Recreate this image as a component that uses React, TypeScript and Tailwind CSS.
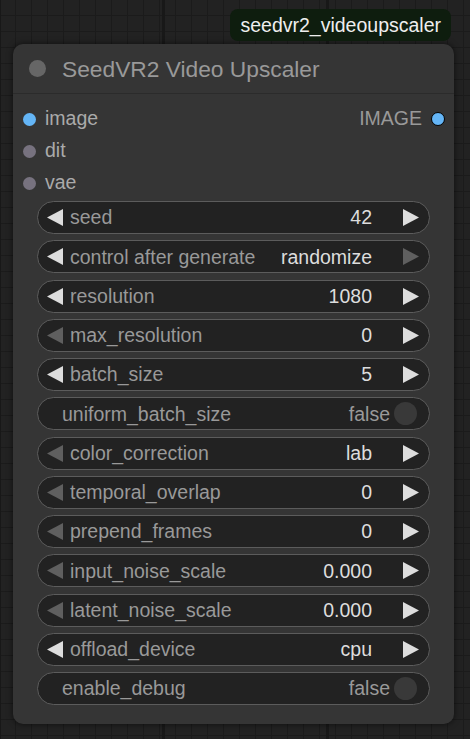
import React from "react";

type Widget =
  | { kind: "number"; label: string; value: string; left: boolean; right: boolean }
  | { kind: "toggle"; label: string; value: string };

const widgets: Widget[] = [
  { kind: "number", label: "seed", value: "42", left: true, right: true },
  { kind: "number", label: "control after generate", value: "randomize", left: true, right: false },
  { kind: "number", label: "resolution", value: "1080", left: true, right: true },
  { kind: "number", label: "max_resolution", value: "0", left: false, right: true },
  { kind: "number", label: "batch_size", value: "5", left: true, right: true },
  { kind: "toggle", label: "uniform_batch_size", value: "false" },
  { kind: "number", label: "color_correction", value: "lab", left: false, right: true },
  { kind: "number", label: "temporal_overlap", value: "0", left: false, right: true },
  { kind: "number", label: "prepend_frames", value: "0", left: false, right: true },
  { kind: "number", label: "input_noise_scale", value: "0.000", left: false, right: true },
  { kind: "number", label: "latent_noise_scale", value: "0.000", left: false, right: true },
  { kind: "number", label: "offload_device", value: "cpu", left: true, right: true },
  { kind: "toggle", label: "enable_debug", value: "false" },
];

function Arrow({ dir, on }: { dir: "left" | "right"; on: boolean }) {
  return (
    <svg width="16" height="17" viewBox="0 0 16 17" className="shrink-0">
      <polygon
        points={dir === "left" ? "16,0 16,17 0,8.5" : "0,0 0,17 16,8.5"}
        fill={on ? "#dddddd" : "#5f5f5f"}
      />
    </svg>
  );
}

function Row({ w }: { w: Widget }) {
  if (w.kind === "toggle") {
    return (
      <div className="flex h-[33px] items-center rounded-full border-[1.5px] border-[#5c5c5c] bg-[#222222] pl-[24px] pr-[12px]">
        <span className="flex-1 pt-[1px] text-[#999999]">{w.label}</span>
        <span className="pt-[1px] text-[#999999]">{w.value}</span>
        <span className="ml-[4px] h-[23px] w-[23px] rounded-full bg-[#393939]" />
      </div>
    );
  }
  return (
    <div className="flex h-[33px] items-center rounded-full border-[1.5px] border-[#5c5c5c] bg-[#222222] pl-[9px] pr-[10px]">
      <Arrow dir="left" on={w.left} />
      <span className="ml-[7px] flex-1 pt-[1px] text-[#999999]">{w.label}</span>
      <span className="mr-[31px] pt-[1px] text-[#dddddd]">{w.value}</span>
      <Arrow dir="right" on={w.right} />
    </div>
  );
}

export default function App() {
  return (
    <div
      className="h-[739px] w-[470px] overflow-hidden bg-[#222222] bg-[linear-gradient(to_right,#181818_3px,transparent_3px),linear-gradient(to_right,#1b1b1b_1px,transparent_1px),linear-gradient(to_bottom,#1b1b1b_1px,transparent_1px)] bg-[size:164px_100%,16px_16px,16px_16px] bg-[position:-2px_0,15px_15px,15px_15px] pt-[9px] font-['Liberation_Sans',Arial,sans-serif] text-[19.5px] leading-none"
    >
      <div className="flex justify-end pr-[19px]">
        <div className="flex h-[32px] items-center rounded-[8px] bg-[#0e1d0e] px-[10px] pt-[1px] text-[#eeeeee]">
          seedvr2_videoupscaler
        </div>
      </div>
      <div className="ml-[13px] mt-[3px] w-[441px] rounded-[10px] bg-[#353535] pb-[19px] shadow-[0_0_6px_rgba(0,0,0,0.6)]">
        <div className="flex h-[50px] items-center border-b border-[#2b2b2b] pl-[16px]">
          <span className="h-[17px] w-[17px] rounded-full bg-[#666666]" />
          <span className="ml-[16px] pt-[2px] text-[22.75px] text-[#999999]">SeedVR2 Video Upscaler</span>
        </div>
        <div className="pt-[9px]">
          <div className="flex h-[32px] items-center pl-[10px] pr-[9px]">
            <span className="h-[13px] w-[13px] rounded-full bg-[#64b5f6]" />
            <span className="ml-[9px] flex-1 text-[#aaaaaa]">image</span>
            <span className="text-[#999999]">IMAGE</span>
            <span className="ml-[9px] h-[14px] w-[14px] rounded-full border-[1.5px] border-black bg-[#64b5f6]" />
          </div>
          <div className="flex h-[32px] items-center pl-[10px]">
            <span className="h-[13px] w-[13px] rounded-full bg-[#77727f]" />
            <span className="ml-[9px] text-[#aaaaaa]">dit</span>
          </div>
          <div className="flex h-[32px] items-center pl-[10px]">
            <span className="h-[13px] w-[13px] rounded-full bg-[#77727f]" />
            <span className="ml-[9px] text-[#aaaaaa]">vae</span>
          </div>
        </div>
        <div className="mx-[24px] mt-[2px] flex flex-col gap-[6.25px]">
          {widgets.map((w) => (
            <Row key={w.label} w={w} />
          ))}
        </div>
      </div>
    </div>
  );
}
